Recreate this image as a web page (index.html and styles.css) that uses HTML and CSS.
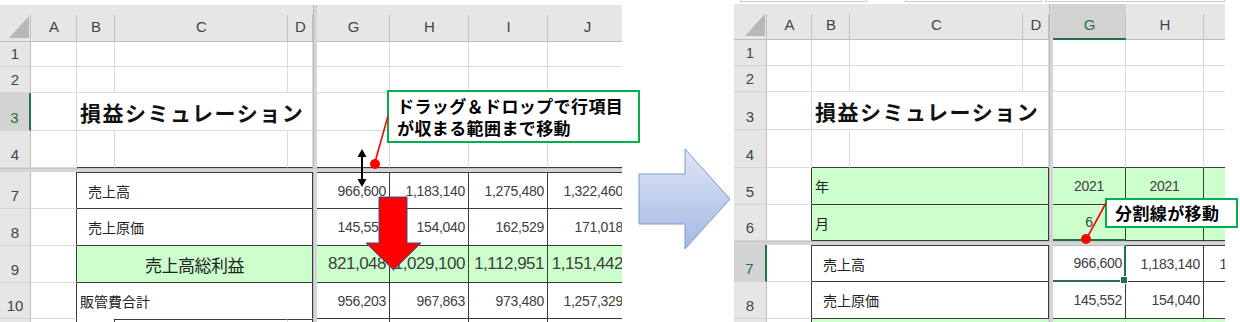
FILE: index.html
```html
<!DOCTYPE html>
<html lang="ja">
<head>
<meta charset="utf-8">
<title>損益シミュレーション</title>
<link rel="stylesheet" href="styles.css">
</head>
<body>
<div class="page">
  <section class="sheet sheet-left">
    <div class="grid grid-left">
      <div class="split-v"></div>
      <div class="split-h split-h-left"></div>
      <div class="ch corner"></div><div class="ch">A</div><div class="ch">B</div><div class="ch">C</div><div class="ch">D</div><div class="ch">G</div><div class="ch">H</div><div class="ch">I</div><div class="ch">J</div>

      <div class="rh">1</div><div class="c"></div><div class="c"></div><div class="c"></div><div class="c"></div><div class="c"></div><div class="c"></div><div class="c"></div><div class="c"></div>
      <div class="rh">2</div><div class="c"></div><div class="c"></div><div class="c"></div><div class="c"></div><div class="c"></div><div class="c"></div><div class="c"></div><div class="c"></div>
      <div class="rh sel-rh">3</div><div class="c"></div><div class="c span3 title">損益シミュレーション</div><div class="c"></div><div class="c"></div><div class="c"></div><div class="c"></div>
      <div class="rh">4</div><div class="c"></div><div class="c db"></div><div class="c db"></div><div class="c db"></div><div class="c db"></div><div class="c db"></div><div class="c db"></div><div class="c db"></div>

      <div class="rh">7</div><div class="c dr"></div><div class="c span3 dt dr db ind">売上高</div><div class="c n dt dr db">966,600</div><div class="c n dt dr db">1,183,140</div><div class="c n dt dr db">1,275,480</div><div class="c n dt dr db">1,322,460</div>
      <div class="rh">8</div><div class="c dr"></div><div class="c span3 dr db ind">売上原価</div><div class="c n dr db">145,552</div><div class="c n dr db">154,040</div><div class="c n dr db">162,529</div><div class="c n dr db">171,018</div>
      <div class="rh">9</div><div class="c dr"></div><div class="c span3 g dr db ctr big">売上高総利益</div><div class="c n g dr db big">821,048</div><div class="c n g dr db big">1,029,100</div><div class="c n g dr db big">1,112,951</div><div class="c n g dr db big">1,151,442</div>
      <div class="rh">10</div><div class="c dr"></div><div class="c span3 dr nb">販管費合計</div><div class="c n dr db">956,203</div><div class="c n dr db">967,863</div><div class="c n dr db">973,480</div><div class="c n dr db">1,257,329</div>
      <div class="rh"></div><div class="c dr"></div><div class="c dr"></div><div class="c dt"></div><div class="c dt dr"></div><div class="c dr"></div><div class="c dr"></div><div class="c dr"></div><div class="c dr"></div>
    </div>
  </section>

  <div class="gap">
    <svg class="big-arrow" width="94" height="103" viewBox="0 0 94 103">
      <defs>
        <linearGradient id="blueFill" x1="0" y1="0" x2="0" y2="1">
          <stop offset="0" stop-color="#dfe7f5"/>
          <stop offset="1" stop-color="#a3b8e3"/>
        </linearGradient>
      </defs>
      <polygon points="1,26 47,26 47,1 92,51 47,101 47,76 1,76" fill="url(#blueFill)" stroke="#7f99cd" stroke-width="1"/>
    </svg>
  </div>

  <section class="sheet sheet-right">
    <div class="fbar">
      <div class="fbox fbox1"></div>
      <div class="fbox fbox2"></div>
      <div class="fbox fbox3"></div>
    </div>
    <div class="grid grid-right">
      <div class="split-v"></div>
      <div class="split-h split-h-right"></div>
      <div class="ch corner"></div><div class="ch">A</div><div class="ch">B</div><div class="ch">C</div><div class="ch">D</div><div class="ch sel-ch">G</div><div class="ch">H</div><div class="ch"></div>

      <div class="rh">1</div><div class="c"></div><div class="c"></div><div class="c"></div><div class="c"></div><div class="c"></div><div class="c"></div><div class="c"></div>
      <div class="rh">2</div><div class="c"></div><div class="c"></div><div class="c"></div><div class="c"></div><div class="c"></div><div class="c"></div><div class="c"></div>
      <div class="rh">3</div><div class="c"></div><div class="c span3 title">損益シミュレーション</div><div class="c"></div><div class="c"></div><div class="c"></div>
      <div class="rh">4</div><div class="c"></div><div class="c db"></div><div class="c db"></div><div class="c db"></div><div class="c db"></div><div class="c db"></div><div class="c db"></div>
      <div class="rh">5</div><div class="c dr"></div><div class="c span3 g dr db">年</div><div class="c n g dr db ctr">2021</div><div class="c n g dr db ctr">2021</div><div class="c g db"></div>
      <div class="rh">6</div><div class="c dr"></div><div class="c span3 g dr db">月</div><div class="c n g dr ctr gb">6</div><div class="c n g dr db ctr"></div><div class="c g db"></div>

      <div class="rh sel-rh">7</div><div class="c dr"></div><div class="c span3 dt dr db ind">売上高</div><div class="c n sel-cell">966,600</div><div class="c n dt dr db">1,183,140</div><div class="c n dt db">1,275,480</div>
      <div class="rh">8</div><div class="c dr"></div><div class="c span3 dr db ind">売上原価</div><div class="c n dr db">145,552</div><div class="c n dr db">154,040</div><div class="c n db"></div>
      <div class="rh"></div><div class="c dr"></div><div class="c span3 g"></div><div class="c g"></div><div class="c g"></div><div class="c g"></div>
    </div>
  </section>

  <div class="callout callout-left">ドラッグ＆ドロップで行項目<br>が収まる範囲まで移動</div>
  <div class="callout callout-right">分割線が移動</div>

  <svg class="overlay" width="1240" height="322" viewBox="0 0 1240 322">
    <line x1="388" y1="116" x2="375" y2="162" stroke="#ff0000" stroke-width="1.6"/>
    <circle cx="375" cy="164" r="5" fill="#ff0000"/>
    <line x1="362" y1="155" x2="362" y2="181" stroke="#000" stroke-width="2"/>
    <polygon points="362,149 357.5,157 366.5,157" fill="#000"/>
    <polygon points="362,187 357.5,179 366.5,179" fill="#000"/>
    <polygon points="379,197 407,197 407,243 421,243 393.5,270 366,243 379,243" fill="#ff0000" stroke="#2f5597" stroke-width="1"/>
    <line x1="1106" y1="203" x2="1088" y2="236" stroke="#ff0000" stroke-width="1.6"/>
    <circle cx="1086" cy="239" r="5" fill="#ff0000"/>
  </svg>
</div>
</body>
</html>
```

FILE: styles.css
```css
* {
  box-sizing: border-box;
  margin: 0;
  padding: 0;
}

html, body {
  width: 1240px;
  height: 322px;
  overflow: hidden;
  background: #fff;
}

body {
  font-family: "Noto Sans CJK JP", "Liberation Sans", sans-serif;
  color: #222;
}

.page {
  position: relative;
  width: 1240px;
  height: 322px;
  display: flex;
  align-items: flex-start;
}

.sheet {
  flex: none;
  height: 322px;
  overflow: hidden;
}

.sheet-left {
  width: 622px;
  padding-top: 5px;
}

.gap {
  flex: none;
  width: 112px;
  padding: 148px 0 0 16px;
}

.big-arrow {
  display: block;
}

.sheet-right {
  width: 491px;
  display: flex;
  flex-direction: column;
}

.fbar {
  flex: none;
  height: 4px;
  display: flex;
}

.fbox {
  height: 2px;
  border: 1px solid #c9c9c9;
  border-top: none;
  background: #fff;
}

.fbox1 { margin-left: 6px; width: 127px; }
.fbox2 { margin-left: 38px; width: 137px; }
.fbox3 { margin-left: 3px; width: 180px; }

.grid {
  display: grid;
}

.grid-left {
  width: 627px;
  grid-template-columns: 31px 46px 38px 173px 25px 4px 73px 79px 79px 79px;
  grid-template-rows: 37px 25px 26px 38px 37px 4px 37px 37px 37px 36px 20px;
}

.grid-right {
  width: 549px;
  grid-template-columns: 33px 45px 38px 173px 26px 4px 73px 78px 79px;
  grid-template-rows: 36px 26px 26px 38px 38px 37px 36px 4px 37px 37px 20px;
}

.split-v {
  grid-column: 6 / 7;
  grid-row: 1 / -1;
  background: #d5d5d5;
  border-left: 1px solid #bcbcbc;
  z-index: 1;
}

.split-h {
  grid-column: 1 / -1;
  background: #d5d5d5;
  border-top: 1px solid #c4c4c4;
  z-index: 1;
}

.split-h-left { grid-row: 6 / 7; }
.split-h-right { grid-row: 8 / 9; }

/* headers */
.ch {
  display: flex;
  justify-content: center;
  align-items: flex-end;
  padding-bottom: 6px;
  font-family: "Liberation Sans", sans-serif;
  font-size: 15px;
  line-height: 16px;
  color: #444;
  background-color: #e6e6e6;
  background-image: linear-gradient(#c2c2c2, #c2c2c2);
  background-size: 1px 72%;
  background-position: right bottom;
  background-repeat: no-repeat;
  border-bottom: 1px solid #bdbdbd;
}

.corner {
  position: relative;
}

.corner::after {
  content: "";
  position: absolute;
  right: 2px;
  bottom: 3px;
  width: 20px;
  height: 22px;
  background: #b8b8b8;
  clip-path: polygon(100% 0, 100% 100%, 0 100%);
}

.sel-ch {
  background-color: #d2d2d2;
  color: #217346;
  border-bottom: 2px solid #217346;
  padding-bottom: 5px;
}

.rh {
  display: flex;
  justify-content: center;
  align-items: flex-end;
  padding-bottom: 4px;
  font-family: "Liberation Sans", sans-serif;
  font-size: 15px;
  line-height: 16px;
  color: #444;
  background: #e6e6e6;
  border-right: 1px solid #bdbdbd;
  border-bottom: 1px solid #d6d6d6;
}

.sel-rh {
  background: #d3d3d3;
  color: #217346;
  border-right: 2px solid #217346;
}

/* cells */
.c {
  display: flex;
  align-items: center;
  padding: 0 3px;
  white-space: nowrap;
  font-size: 14px;
  background: #fff;
  border-right: 1px solid #dadada;
  border-bottom: 1px solid #dadada;
}

.span3 { grid-column: span 3; }

.title {
  font-size: 21px;
  font-weight: 700;
  letter-spacing: 1.5px;
  color: #111;
  padding-left: 3px;
}

.n {
  justify-content: flex-end;
  font-family: "Liberation Sans", sans-serif;
  letter-spacing: -0.3px;
  color: #404040;
}

.big {
  font-size: 17px;
  letter-spacing: -0.5px;
}

.ctr { justify-content: center; }
.ind { padding-left: 11px; }
.g { background: #ccffcc; }

.dr { border-right-color: #3a3a3a; }
.db { border-bottom-color: #3a3a3a; }
.dt { border-top: 1px solid #3a3a3a; }
.nb { border-bottom-color: #fff; }
.gb { border-bottom: 2px solid #217346; }

.sel-cell {
  position: relative;
  z-index: 2;
  padding-right: 2px;
  border-top: 1px solid #bdbdbd;
  border-right: 2px solid #217346;
  border-bottom: 2px solid #217346;
}

.sel-cell::after {
  content: "";
  position: absolute;
  right: -4px;
  bottom: -4px;
  width: 6px;
  height: 6px;
  background: #217346;
  border: 1px solid #fff;
}

/* callouts */
.callout {
  position: absolute;
  z-index: 3;
  background: #fff;
  border: 2px solid #00b050;
  font-size: 17px;
  font-weight: 700;
  letter-spacing: 0.4px;
  color: #000;
  white-space: nowrap;
}

.callout-left {
  left: 387px;
  top: 90px;
  width: 253px;
  height: 53px;
  padding: 3px 0 0 8px;
  line-height: 22px;
}

.callout-right {
  left: 1105px;
  top: 198px;
  width: 133px;
  height: 30px;
  padding-left: 8px;
  line-height: 26px;
}

.overlay {
  position: absolute;
  left: 0;
  top: 0;
  z-index: 4;
  pointer-events: none;
}
```
